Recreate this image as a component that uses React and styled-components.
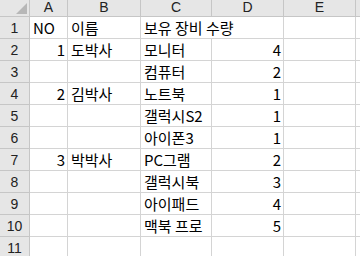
import styled, { createGlobalStyle } from "styled-components";

const GlobalStyle = createGlobalStyle`
  html, body {
    margin: 0;
    padding: 0;
    background: #ffffff;
    overflow: hidden;
  }
`;

const columns = ["A", "B", "C", "D", "E", ""];

const rows = [
  { no: "NO", name: "이름", item: "보유 장비 수량", spill: true },
  { no: "1", name: "도박사", item: "모니터", qty: "4" },
  { item: "컴퓨터", qty: "2" },
  { no: "2", name: "김박사", item: "노트북", qty: "1" },
  { item: "갤럭시S2", qty: "1" },
  { item: "아이폰3", qty: "1" },
  { no: "3", name: "박박사", item: "PC그램", qty: "2" },
  { item: "갤럭시북", qty: "3" },
  { item: "아이패드", qty: "4" },
  { item: "맥북 프로", qty: "5" },
  {},
];

function App() {
  return (
    <>
      <GlobalStyle />
      <Sheet>
        <Corner>
          <svg width="30" height="17" viewBox="0 0 30 17">
            <polygon points="27,3 27,14 16,14" fill="#b7b7b7" />
          </svg>
        </Corner>
        {columns.map((c, i) => (
          <ColHead key={i}>{c}</ColHead>
        ))}

        {rows.map((r, i) => (
          <Row key={i} r={r} n={i + 1} />
        ))}
      </Sheet>
    </>
  );
}

function Row({ r, n }) {
  return (
    <>
      <RowHead>{n}</RowHead>
      <Cell $align={r.spill ? "left" : "right"}>{r.no}</Cell>
      <Cell>{r.name}</Cell>
      {r.spill ? (
        <Cell $span={2}>{r.item}</Cell>
      ) : (
        <>
          <Cell>{r.item}</Cell>
          <Cell $align="right">{r.qty}</Cell>
        </>
      )}
      <Cell />
      <Cell />
    </>
  );
}

export default App;

const Sheet = styled.div`
  display: grid;
  grid-template-columns: 30px 38px 73px 71px 72px 72px 1fr;
  grid-template-rows: 17px;
  grid-auto-rows: 22px;
  width: 360px;
  height: 256px;
  overflow: hidden;
`;

const Corner = styled.div`
  background: #e6e6e6;
  border-right: 1px solid #c6c6c6;
  border-bottom: 1px solid #c6c6c6;
  box-sizing: border-box;
  svg {
    display: block;
  }
`;

const ColHead = styled.div`
  display: flex;
  align-items: center;
  justify-content: center;
  padding-bottom: 2px;
  box-sizing: border-box;
  background: #e6e6e6;
  border-right: 1px solid #c6c6c6;
  border-bottom: 1px solid #c6c6c6;
  font-family: "Liberation Sans", Arial, sans-serif;
  font-size: 14px;
  color: #222222;
`;

const RowHead = styled.div`
  display: flex;
  align-items: center;
  justify-content: center;
  box-sizing: border-box;
  background: #e6e6e6;
  border-right: 1px solid #c6c6c6;
  border-bottom: 1px solid #c6c6c6;
  font-family: "Liberation Sans", Arial, sans-serif;
  font-size: 14px;
  color: #222222;
`;

const Cell = styled.div`
  grid-column: ${({ $span }) => ($span ? `span ${$span}` : "auto")};
  display: flex;
  align-items: center;
  justify-content: ${({ $align }) =>
    $align === "right" ? "flex-end" : "flex-start"};
  padding: 0 2px 0 3px;
  box-sizing: border-box;
  border-right: 1px solid #d4d4d4;
  border-bottom: 1px solid #d4d4d4;
  white-space: nowrap;
  font-family: "Noto Sans CJK KR", "Noto Sans", sans-serif;
  font-size: 15px;
  color: #000000;
`;
